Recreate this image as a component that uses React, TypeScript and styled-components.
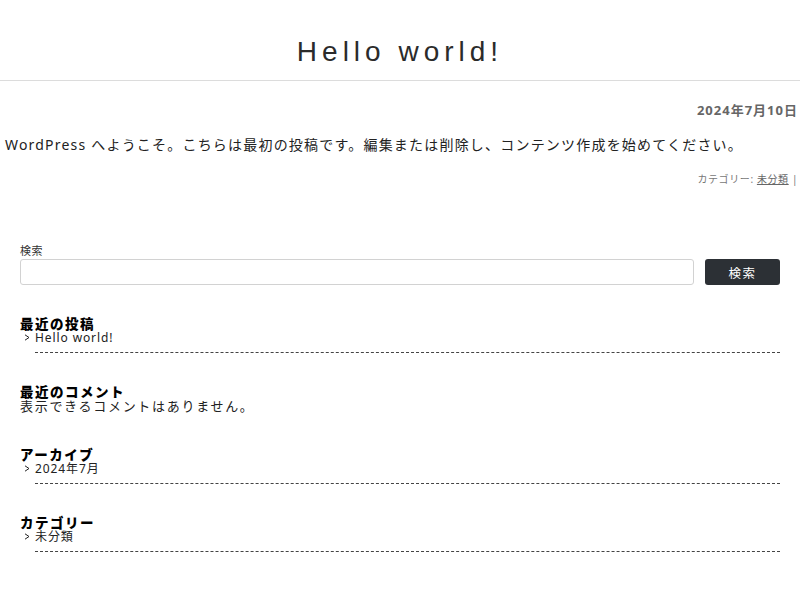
import React from "react";
import styled, { createGlobalStyle } from "styled-components";

const Global = createGlobalStyle`
  html, body { margin: 0; padding: 0; background: #fff; }
  body {
    font-family: "Noto Sans", "Noto Sans CJK JP", sans-serif;
    color: #222;
  }
  * { box-sizing: border-box; }
`;

const Page = styled.div`
  width: 800px;
  min-height: 600px;
  display: flex;
  flex-direction: column;
`;

const Header = styled.header`
  border-bottom: 1px solid #dcdcdc;
  padding: 33px 0 9px;
  display: flex;
  justify-content: center;
`;

const Title = styled.h1`
  margin: 0;
  font-family: "Liberation Sans", "Noto Sans CJK JP", sans-serif;
  font-weight: 400;
  font-size: 28px;
  line-height: 38px;
  letter-spacing: 5px;
  color: #2b2b2b;
`;

const Post = styled.article`
  padding: 20px 2px 0 5px;
  display: flex;
  flex-direction: column;
`;

const DateLine = styled.div`
  text-align: right;
  font-size: 13px;
  font-weight: 700;
  letter-spacing: 1px;
  line-height: 18px;
  color: #666;
`;

const Content = styled.p`
  margin: 17px 0 0;
  font-size: 14px;
  letter-spacing: 1.2px;
  line-height: 18px;
  color: #222;
`;

const Meta = styled.div`
  margin-top: 18px;
  text-align: right;
  font-size: 10px;
  letter-spacing: 0.6px;
  line-height: 14px;
  color: #777;
`;

const MetaLink = styled.span`
  text-decoration: underline;
  color: #666;
`;

const Sidebar = styled.aside`
  padding: 58px 20px 0;
  display: flex;
  flex-direction: column;
`;

const SearchBlock = styled.div`
  display: flex;
  flex-direction: column;
  margin-bottom: 32px;
`;

const Label = styled.label`
  font-size: 11px;
  line-height: 14px;
  letter-spacing: 0.5px;
  color: #333;
  margin-bottom: 1px;
`;

const SearchRow = styled.div`
  display: flex;
  gap: 11px;
`;

const Input = styled.input`
  flex: 1;
  height: 26px;
  border: 1px solid #d2d2d2;
  border-radius: 3px;
  background: #fff;
  outline: none;
`;

const Button = styled.button`
  width: 75px;
  height: 26px;
  border: none;
  border-radius: 3px;
  background: #2c3035;
  color: #fff;
  font-family: "Noto Sans", "Noto Sans CJK JP", sans-serif;
  font-size: 12.5px;
  letter-spacing: 1.5px;
  cursor: pointer;
`;

const Widget = styled.section<{ $extra?: number }>`
  display: flex;
  flex-direction: column;
  margin-bottom: ${(p) => 32 + (p.$extra ?? 0)}px;
`;

const WidgetTitle = styled.h2`
  margin: 0;
  font-size: 13.5px;
  font-weight: 900;
  letter-spacing: 1.5px;
  line-height: 14px;
  color: #000;
`;

const List = styled.ul`
  margin: 0;
  padding: 0;
  list-style: none;
`;

const Item = styled.li`
  display: flex;
  align-items: flex-start;
`;

const Marker = styled.span`
  width: 15px;
  height: 12px;
  display: flex;
  align-items: center;
  padding-left: 4px;
  color: #222;
`;

const Entry = styled.div`
  flex: 1;
  font-size: 12px;
  letter-spacing: 0.9px;
  line-height: 14px;
  padding-bottom: 7px;
  border-bottom: 1px dashed #444;
  color: #222;
`;

const Note = styled.p`
  margin: 0;
  font-size: 13px;
  letter-spacing: 1.7px;
  line-height: 14px;
  color: #222;
`;

const Chevron = () => (
  <svg width="6" height="7" viewBox="0 0 6 7" fill="none">
    <polyline points="1,0.8 5,3.5 1,6.2" stroke="#222" strokeWidth="1" />
  </svg>
);

const LinkList = ({ items }: { items: string[] }) => (
  <List>
    {items.map((t) => (
      <Item key={t}>
        <Marker>
          <Chevron />
        </Marker>
        <Entry>{t}</Entry>
      </Item>
    ))}
  </List>
);

export default function App() {
  return (
    <Page>
      <Global />
      <Header>
        <Title>Hello world!</Title>
      </Header>
      <Post>
        <DateLine>2024年7月10日</DateLine>
        <Content>
          WordPress へようこそ。こちらは最初の投稿です。編集または削除し、コンテンツ作成を始めてください。
        </Content>
        <Meta>
          カテゴリー: <MetaLink>未分類</MetaLink> |
        </Meta>
      </Post>
      <Sidebar>
        <SearchBlock>
          <Label>検索</Label>
          <SearchRow>
            <Input type="text" />
            <Button>検索</Button>
          </SearchRow>
        </SearchBlock>
        <Widget>
          <WidgetTitle>最近の投稿</WidgetTitle>
          <LinkList items={["Hello world!"]} />
        </Widget>
        <Widget $extra={3}>
          <WidgetTitle>最近のコメント</WidgetTitle>
          <Note>表示できるコメントはありません。</Note>
        </Widget>
        <Widget>
          <WidgetTitle>アーカイブ</WidgetTitle>
          <LinkList items={["2024年7月"]} />
        </Widget>
        <Widget>
          <WidgetTitle>カテゴリー</WidgetTitle>
          <LinkList items={["未分類"]} />
        </Widget>
      </Sidebar>
    </Page>
  );
}
